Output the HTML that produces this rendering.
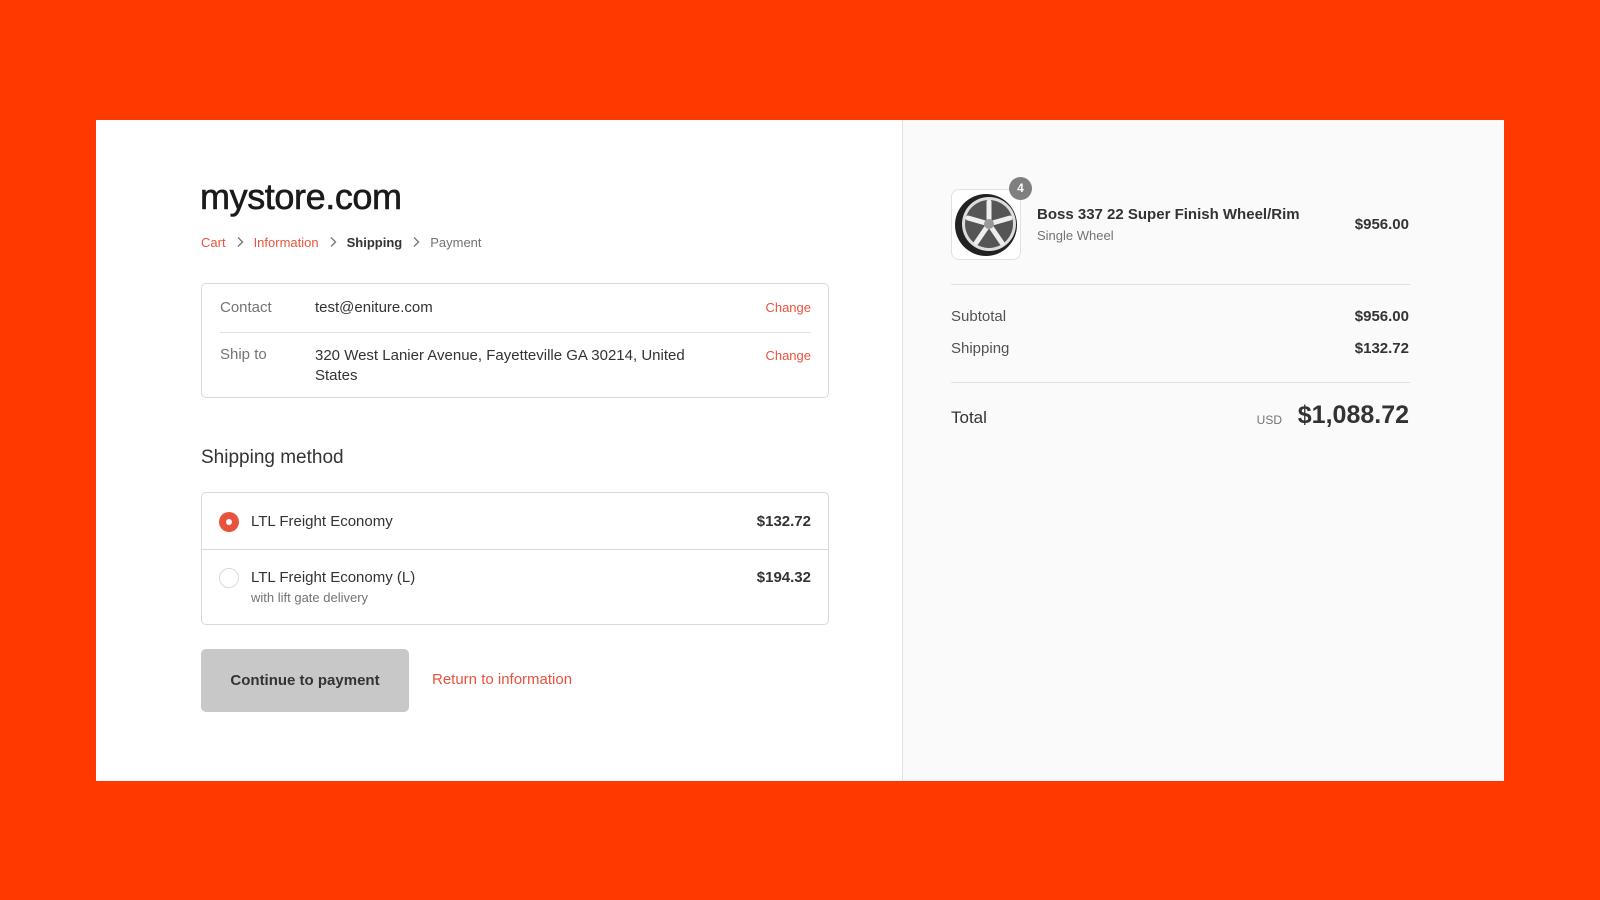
<!DOCTYPE html>
<html><head><meta charset="utf-8"><style>
*{box-sizing:border-box;margin:0;padding:0}
body{width:1600px;height:900px;background:#ff3a00;font-family:"Liberation Sans",sans-serif;color:#333;position:relative;overflow:hidden}
.card{position:absolute;left:96px;top:120px;width:1408px;height:661px;background:#fff}
.right{position:absolute;left:806px;top:0;width:602px;height:661px;background:#fafafa;border-left:1px solid #e1e1e1}
.a{position:absolute;white-space:nowrap}
.red{color:#e9533e}
.box{position:absolute;border:1px solid #d9d9d9;border-radius:5px}
.g{color:#737373}
.chev{display:inline-block;margin:0 10px;vertical-align:-1px}
</style></head><body>
<div class="card">
 <div class="a" style="left:104px;top:56px;font-size:36px;letter-spacing:-0.4px;color:#1a1a1a;-webkit-text-stroke:0.6px #1a1a1a">mystore.com</div>
 <div class="a" style="left:105px;top:115px;font-size:13px">
  <span class="red">Cart</span><svg class="chev" width="8" height="12" viewBox="0 0 8 12"><path d="M2 1.5 L6.5 6 L2 10.5" fill="none" stroke="#777" stroke-width="1.4"/></svg><span class="red">Information</span><svg class="chev" width="8" height="12" viewBox="0 0 8 12"><path d="M2 1.5 L6.5 6 L2 10.5" fill="none" stroke="#777" stroke-width="1.4"/></svg><span style="color:#333;font-weight:bold">Shipping</span><svg class="chev" width="8" height="12" viewBox="0 0 8 12"><path d="M2 1.5 L6.5 6 L2 10.5" fill="none" stroke="#777" stroke-width="1.4"/></svg><span class="g">Payment</span>
 </div>
 <div class="box" style="left:105px;top:163px;width:628px;height:115px">
  <div class="a g" style="left:18px;top:15px;font-size:15px">Contact</div>
  <div class="a" style="left:113px;top:15px;font-size:15px">test@eniture.com</div>
  <div class="a red" style="right:17px;top:16px;font-size:13px">Change</div>
  <div style="position:absolute;left:18px;right:17px;top:48px;border-top:1px solid #e1e1e1"></div>
  <div class="a g" style="left:18px;top:62px;font-size:15px">Ship to</div>
  <div class="a" style="left:113px;top:62px;font-size:15px;line-height:20px;white-space:normal;width:410px">320 West Lanier Avenue, Fayetteville GA 30214, United States</div>
  <div class="a red" style="right:17px;top:64px;font-size:13px">Change</div>
 </div>
 <div class="a" style="left:105px;top:327px;font-size:19px;color:#333">Shipping method</div>
 <div class="box" style="left:105px;top:372px;width:628px;height:133px">
  <div style="position:absolute;left:17px;top:19px;width:20px;height:20px;border-radius:50%;background:#e9533e"><div style="position:absolute;left:7px;top:7px;width:6px;height:6px;border-radius:50%;background:#fff"></div></div>
  <div class="a" style="left:49px;top:20px;font-size:15px">LTL Freight Economy</div>
  <div class="a" style="right:17px;top:20px;font-size:15px;font-weight:bold;color:#333">$132.72</div>
  <div style="position:absolute;left:0;right:0;top:56px;border-top:1px solid #d9d9d9"></div>
  <div style="position:absolute;left:17px;top:75px;width:20px;height:20px;border-radius:50%;border:1px solid #d9d9d9"></div>
  <div class="a" style="left:49px;top:76px;font-size:15px">LTL Freight Economy (L)</div>
  <div class="a g" style="left:49px;top:97px;font-size:13px">with lift gate delivery</div>
  <div class="a" style="right:17px;top:76px;font-size:15px;font-weight:bold;color:#333">$194.32</div>
 </div>
 <div style="position:absolute;left:105px;top:529px;width:208px;height:63px;background:#c8c8c8;border-radius:5px;font-size:15px;font-weight:bold;color:#333;text-align:center;line-height:63px">Continue to payment</div>
 <div class="a red" style="left:336px;top:551px;font-size:15px">Return to information</div>

 <div class="right">
  <div style="position:absolute;left:48px;top:69px;width:70px;height:71px;border:1px solid #e1e1e1;border-radius:8px;background:#fff">
   <svg width="68" height="69" viewBox="0 0 68 69"><circle cx="34" cy="35" r="31" fill="#222"/><circle cx="37" cy="34" r="27" fill="#ddd"/><circle cx="37" cy="34" r="24" fill="#555"/>
   <g stroke="#eee" stroke-width="5" stroke-linecap="round"><path d="M37 34 L37 12"/><path d="M37 34 L58 28"/><path d="M37 34 L50 53"/><path d="M37 34 L24 53"/><path d="M37 34 L16 28"/></g><circle cx="37" cy="34" r="5" fill="#999"/></svg>
  </div>
  <div style="position:absolute;left:106px;top:57px;width:23px;height:23px;border-radius:50%;background:#7f7f7f;color:#fff;font-size:12px;font-weight:bold;text-align:center;line-height:23px">4</div>
  <div class="a" style="left:134px;top:86px;font-size:15px;font-weight:bold;color:#333">Boss 337 22 Super Finish Wheel/Rim</div>
  <div class="a g" style="left:134px;top:108px;font-size:13px">Single Wheel</div>
  <div class="a" style="right:95px;top:96px;font-size:15px;font-weight:bold;color:#333">$956.00</div>
  <div style="position:absolute;left:48px;width:459px;top:164px;border-top:1px solid #e1e1e1"></div>
  <div class="a" style="left:48px;top:188px;font-size:15px;color:#535353">Subtotal</div>
  <div class="a" style="right:95px;top:188px;font-size:15px;font-weight:bold;color:#333">$956.00</div>
  <div class="a" style="left:48px;top:220px;font-size:15px;color:#535353">Shipping</div>
  <div class="a" style="right:95px;top:220px;font-size:15px;font-weight:bold;color:#333">$132.72</div>
  <div style="position:absolute;left:48px;width:459px;top:262px;border-top:1px solid #e1e1e1"></div>
  <div class="a" style="left:48px;top:288px;font-size:17px;color:#333">Total</div>
  <div class="a g" style="right:222px;top:293px;font-size:12px">USD</div>
  <div class="a" style="right:95px;top:281px;font-size:25px;font-weight:bold;color:#333">$1,088.72</div>
 </div>
</div>
</body></html>
